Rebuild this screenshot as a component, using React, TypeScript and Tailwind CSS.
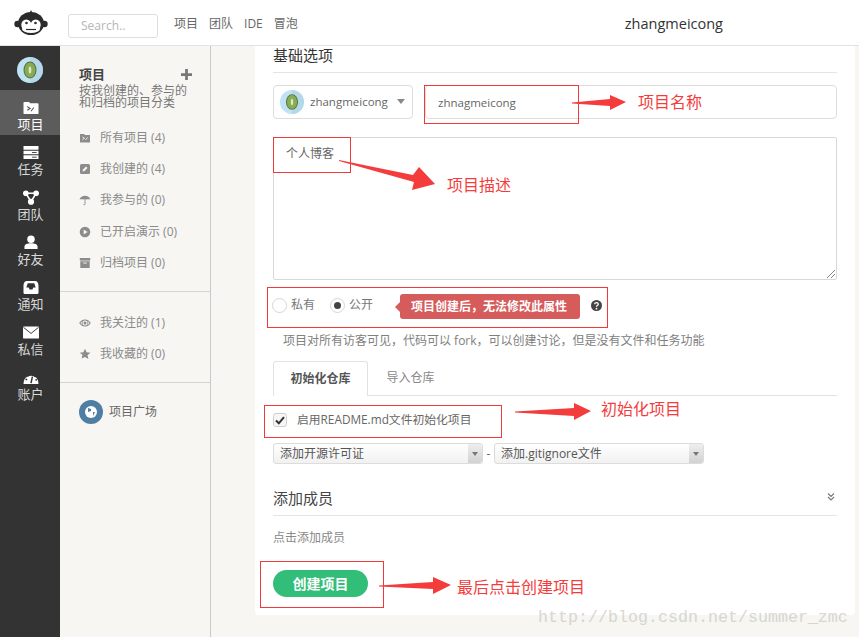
import React from "react";

const Kiwi = ({ size }: { size: number }) => (
  <svg width={size} height={size} viewBox="0 0 26 26" className="shrink-0">
    <circle cx="13" cy="13" r="13" fill="#bfe3f2" />
    <path d="M13 0a13 13 0 0 1 0 26z" fill="#acd3e6" opacity="0.7" />
    <ellipse cx="13" cy="13" rx="6.5" ry="8.5" fill="#5f6b3a" />
    <ellipse cx="13" cy="13" rx="5.5" ry="7.5" fill="#84ad55" />
    <ellipse cx="13" cy="13" rx="1.3" ry="3.5" fill="#e3e8b8" />
  </svg>
);

const NavIcon = ({ kind }: { kind: string }) => {
  const p = { width: 18, height: 15, viewBox: "0 0 18 16", fill: "#fff" };
  switch (kind) {
    case "项目":
      return (
        <svg {...p}>
          <path d="M1 3a1 1 0 0 1 1-1h5l1 1.500h8a1 1 0 0 1 1 1V14a1 1 0 0 1-1 1H2a1 1 0 0 1-1-1z" />
          <path d="M5 7l3 2-3 2M9 12l3-4" stroke="#5a5a5a" strokeWidth="1.200" fill="none" />
        </svg>
      );
    case "任务":
      return (
        <svg {...p}>
          <path d="M1 1h16v4H1zM1 6.200h16v3.600H1zM1 11h16v4H1z" />
          <path d="M10 8h5M10 13h5" stroke="#444" strokeWidth="1" />
        </svg>
      );
    case "团队":
      return (
        <svg {...p}>
          <circle cx="3.500" cy="3.500" r="3" />
          <circle cx="14.500" cy="3.500" r="3" />
          <circle cx="9" cy="12.500" r="3.300" />
          <path d="M3.500 3.500h11L9 12.500z" fill="none" stroke="#fff" strokeWidth="1.700" />
        </svg>
      );
    case "好友":
      return (
        <svg {...p}>
          <circle cx="9" cy="4.500" r="4" />
          <path d="M2 15v-2.500C2 10 5 8.800 9 8.800s7 1.200 7 3.700V15z" />
        </svg>
      );
    case "通知":
      return (
        <svg {...p}>
          <path d="M4.500 1h9c2 0 3.500 2 3.500 5v7.500a1.500 1.500 0 0 1-1.500 1.500h-13A1.500 1.500 0 0 1 1 13.500V6c0-3 1.500-5 3.500-5z" />
          <path d="M4 8l1.500-4.500h7L14 8h-2.500L10.500 10h-3L6.500 8z" fill="#333" />
        </svg>
      );
    case "私信":
      return (
        <svg {...p}>
          <rect x="0.500" y="1.500" width="17" height="13" rx="1" />
          <path d="M1 2.500l8 6.500 8-6.500" stroke="#333" strokeWidth="1" fill="none" />
        </svg>
      );
    default:
      return (
        <svg {...p}>
          <path d="M1 14a8 8 0 1 1 16 0c0 .5-.3 1-1 1H2c-.7 0-1-.5-1-1z" />
          <path d="M9 14l1.500-7" stroke="#333" strokeWidth="1.600" />
          <circle cx="4" cy="10" r="1" fill="#333" />
          <circle cx="6" cy="6" r="1" fill="#333" />
          <circle cx="13" cy="6.500" r="1" fill="#333" />
          <circle cx="14.500" cy="10.500" r="1" fill="#333" />
        </svg>
      );
  }
};

const PanelIcon = ({ kind }: { kind: string }) => {
  const p = { width: 12, height: 12, viewBox: "0 0 12 12", fill: "#8c8c8c" };
  switch (kind) {
    case "folder":
      return (
        <svg {...p}>
          <path d="M1 2h4l1 1h5v7.500H1z" />
          <path d="M3.500 5l2 1.300-2 1.300M6.500 8l2-2.500" stroke="#f7f6f3" strokeWidth=".9" fill="none" />
        </svg>
      );
    case "edit":
      return (
        <svg {...p}>
          <rect x="1" y="1" width="10" height="10" rx="1.500" />
          <path d="M3.500 8.500l.5-2 3-3 1.500 1.500-3 3z" fill="#f7f6f3" />
        </svg>
      );
    case "umbrella":
      return (
        <svg {...p}>
          <path d="M.5 5.500C1.500 3 3.500 1.800 6 1.800s4.500 1.200 5.500 3.700C10 5 9 5 8 5.500 7.200 5 6.800 5 6 5.500 5.200 5 4.800 5 4 5.500 3 5 2 5 .5 5.500z" />
          <path d="M6 5v5c0 1-1.500 1-1.500 0" stroke="#8c8c8c" fill="none" strokeWidth=".9" />
        </svg>
      );
    case "play":
      return (
        <svg {...p}>
          <path fillRule="evenodd" d="M6 .7a5.300 5.300 0 1 1 0 10.600A5.300 5.300 0 0 1 6 .7zM4.700 3.500v5L8.500 6z" />
        </svg>
      );
    case "archive":
      return (
        <svg {...p}>
          <path d="M.8 1h10.400v2.600H.8z" />
          <path fillRule="evenodd" d="M1.300 4.300h9.400V11H1.300zM4.300 5.500v1h3.400v-1z" />
        </svg>
      );
    case "eye":
      return (
        <svg {...p}>
          <path fillRule="evenodd" d="M6 2.500c2.700 0 4.800 1.700 5.800 3.500-1 1.800-3.100 3.500-5.800 3.500S1.200 7.800.2 6C1.200 4.200 3.300 2.500 6 2.500zm0 1a2.500 2.500 0 1 0 0 5 2.500 2.500 0 0 0 0-5zM1.400 6c.8 1 1.500 1.800 2.600 2.200C3.200 7.600 2.700 6.900 2.700 6s.5-1.600 1.300-2.200C2.900 4.200 2.200 5 1.400 6zm9.200 0c-.8-1-1.500-1.800-2.600-2.200.8.600 1.300 1.300 1.300 2.200s-.5 1.600-1.300 2.200c1.100-.4 1.800-1.200 2.600-2.200z" />
          <circle cx="6" cy="6" r="1.500" />
        </svg>
      );
    default:
      return (
        <svg {...p}>
          <path d="M6 .8l1.600 3.500 3.800.4-2.900 2.500.9 3.800L6 8.900l-3.400 1.700.9-3.800L.6 4.700l3.800-.4z" />
        </svg>
      );
  }
};

const nav = ["任务", "团队", "好友", "通知", "私信", "账户"];

const NavItem = ({ label, active }: { label: string; active?: boolean }) => (
  <div className={`h-[45px] pt-[10px] pl-[1px] flex flex-col items-center ${active ? "bg-[#5c5c5c] text-white" : "text-[#d8d8d8]"}`}>
    <NavIcon kind={label} />
    <span className="text-[13px] leading-[15px] mt-[2px]">{label}</span>
  </div>
);

const PanelItem = ({ icon, text }: { icon: string; text: string }) => (
  <div className="h-[31.300px] flex items-center gap-[9px] text-[12px] text-[#8a8a8a]">
    <span className="w-[12px] flex justify-center">
      <PanelIcon kind={icon} />
    </span>
    <span>{text}</span>
  </div>
);

const Select = ({ text, className }: { text: string; className: string }) => (
  <div className={`h-[21px] flex items-center rounded-[3px] border border-[#dcdcdc] bg-gradient-to-b from-white to-[#f1f1f1] ${className}`}>
    <span className="flex-1 pl-[6px] text-[12px] text-[#555]">{text}</span>
    <span className="w-[14px] h-full flex items-center justify-center bg-gradient-to-b from-[#eeeeee] to-[#d2d2d2] rounded-r-[3px]">
      <span className="border-x-[3px] border-x-transparent border-t-[4px] border-t-[#777]" />
    </span>
  </div>
);

const Red = ({ className }: { className: string }) => (
  <div className={`absolute border border-[#f03a3a] ${className}`} />
);

const Note = ({ text, className }: { text: string; className: string }) => (
  <div className={`absolute text-[16px] leading-[20px] text-[#f43c3c] ${className}`}>{text}</div>
);

const Arrow = ({ d, className, w, h }: { d: string; className: string; w: number; h: number }) => (
  <svg width={w} height={h} viewBox={`0 0 ${w} ${h}`} className={`absolute ${className}`}>
    <path d={d} fill="#f43c3c" />
  </svg>
);

export default function App() {
  return (
    <div
      className="relative w-[859px] h-[637px] overflow-hidden bg-[#f7f6f3] flex flex-col"
      style={{ fontFamily: '"Open Sans", "Noto Sans CJK SC", sans-serif' }}
    >
      <header className="h-[46px] shrink-0 bg-white border-b border-[#e2e2e2] flex items-center">
        <div className="w-[68px] pl-[14px]">
          <svg width="34" height="26" viewBox="0 0 34 26">
            <path d="M17 0l2 4 -4 0z" fill="#2b2b2b" />
            <circle cx="3.500" cy="14" r="3.200" fill="#2b2b2b" />
            <circle cx="30.500" cy="14" r="3.200" fill="#2b2b2b" />
            <ellipse cx="17" cy="13.500" rx="13" ry="11.500" fill="#2b2b2b" />
            <ellipse cx="12.300" cy="15" rx="5" ry="5.500" fill="#fff" />
            <ellipse cx="21.700" cy="15" rx="5" ry="5.500" fill="#fff" />
            <ellipse cx="17" cy="19" rx="9" ry="4" fill="#fff" />
            <circle cx="12.500" cy="13" r="1.300" fill="#2b2b2b" />
            <circle cx="21.500" cy="13" r="1.300" fill="#2b2b2b" />
            <path d="M12 19.500h10" stroke="#2b2b2b" strokeWidth="1.200" />
          </svg>
        </div>
        <div className="w-[90px] h-[24px] mt-[7px] rounded-[3px] border border-[#dedede] flex items-center pl-[12px] text-[12px] text-[#b5b5b5]">
          Search..
        </div>
        <nav className="ml-[16px] mt-[3px] flex items-center gap-[11px] text-[12px] text-[#666]">
          <span>项目</span>
          <span>团队</span>
          <span>IDE</span>
          <span>冒泡</span>
        </nav>
        <div className="ml-auto mr-[136px] mt-[2px] text-[14.500px] text-[#333]">zhangmeicong</div>
      </header>

      <div className="flex-1 flex min-h-0">
        <aside className="w-[60px] shrink-0 bg-[#333]">
          <div className="h-[44px] pb-[7px] flex items-end justify-center">
            <Kiwi size={26} />
          </div>
          <NavItem label="项目" active />
          {nav.map((n) => (
            <NavItem key={n} label={n} />
          ))}
        </aside>

        <section className="w-[151px] shrink-0 border-r border-[#c9c9c9] flex flex-col">
          <div className="pl-[19px] pr-[18px] pt-[21px]">
            <div className="flex items-center justify-between h-[15px]">
              <span className="text-[13px] font-semibold text-[#444]">项目</span>
              <svg width="11" height="11" viewBox="0 0 12 12">
                <path d="M4.500 0h3v4.500H12v3H7.500V12h-3V7.500H0v-3h4.500z" fill="#777" />
              </svg>
            </div>
            <p className="text-[12px] leading-[12px] text-[#777] mt-[3px]">按我创建的、参与的和归档的项目分类</p>
          </div>
          <div className="pl-[19px] mt-[13px] pb-[13px] border-b border-[#d4d4d4]">
            <PanelItem icon="folder" text="所有项目 (4)" />
            <PanelItem icon="edit" text="我创建的 (4)" />
            <PanelItem icon="umbrella" text="我参与的 (0)" />
            <PanelItem icon="play" text="已开启演示 (0)" />
            <PanelItem icon="archive" text="归档项目 (0)" />
          </div>
          <div className="pl-[19px] pt-[15px] pb-[12px] border-b border-[#d4d4d4]">
            <PanelItem icon="eye" text="我关注的 (1)" />
            <PanelItem icon="star" text="我收藏的 (0)" />
          </div>
          <div className="pl-[19px] pt-[17px] flex items-center gap-[6px] text-[12px] text-[#666]">
            <svg width="24" height="24" viewBox="0 0 24 24">
              <circle cx="12" cy="12" r="12" fill="#4e7ea3" />
              <path d="M12 6a6 6 0 1 1 0 12 6 6 0 0 1 0-12z" fill="#fff" />
              <path d="M9 8l3 1 0 2 -3 1zM14 12l2 0-2 4z" fill="#4e7ea3" />
            </svg>
            <span>项目广场</span>
          </div>
        </section>

        <main className="flex-1 min-w-0 pl-[44px] pr-[4px]">
          <div className="w-[600px] h-[569px] bg-white rounded-b-[4px] px-[18px] overflow-hidden">
            <div className="h-[27px] border-b border-[#e4e4e4] text-[15px] leading-[18px] text-[#333]">基础选项</div>

            <div className="mt-[12px] flex gap-[12px]">
              <div className="w-[140px] h-[34px] rounded-[4px] border border-[#dcdcdc] flex items-center pl-[6px] text-[11.500px] text-[#666]">
                <Kiwi size={24} />
                <span className="ml-[6px]">zhangmeicong</span>
                <span className="ml-[9px] -mt-[2px] border-x-[4.500px] border-x-transparent border-t-[5px] border-t-[#888]" />
              </div>
              <div className="flex-1 h-[34px] pt-[2px] rounded-[4px] border border-[#dcdcdc] flex items-center pl-[12px] text-[11.500px] text-[#666]">
                zhnagmeicong
              </div>
            </div>

            <div className="relative mt-[18px] h-[143px] rounded-[2px] border border-[#d8d8d8] pl-[12px] pt-[7px] text-[12px] text-[#666]">
              个人博客
              <svg width="8" height="8" viewBox="0 0 8 8" className="absolute right-[1px] bottom-[1px]">
                <path d="M8 0L0 8M8 4L4 8" stroke="#888" strokeWidth="1" />
              </svg>
            </div>

            <div className="mt-[15px] h-[20px] flex items-center text-[12px] text-[#777]">
              <span className="w-[15px] h-[15px] mt-[1px] rounded-full border border-[#d6d6d6] -ml-[1px]" />
              <span className="ml-[4px]">私有</span>
              <span className="ml-[15px] mt-[1px] w-[15px] h-[15px] rounded-full border border-[#d6d6d6] flex items-center justify-center">
                <span className="w-[7px] h-[7px] rounded-full bg-[#444]" />
              </span>
              <span className="ml-[4px]">公开</span>
              <span className="relative ml-[27px] w-[180px] h-[25px] mt-[3px] rounded-[3px] bg-[#d65c5c] text-white font-semibold flex items-center pl-[11px] text-[12px]">
                <span className="absolute -left-[5px] top-[8px] border-y-[5px] border-y-transparent border-r-[5px] border-r-[#d65c5c]" />
                项目创建后，无法修改此属性
              </span>
              <svg width="11" height="11" viewBox="0 0 11 11" className="ml-[11px]">
                <circle cx="5.500" cy="5.500" r="5.500" fill="#444" />
                <path d="M3.700 4.200c0-2.200 3.600-2.200 3.600 0 0 1.300-1.800 1.300-1.800 2.500" stroke="#fff" strokeWidth="1.300" fill="none" />
                <circle cx="5.500" cy="8.700" r=".9" fill="#fff" />
              </svg>
            </div>

            <p className="mt-[17px] pl-[10px] h-[18px] leading-[18px] text-[12px] text-[#808080]">
              项目对所有访客可见，代码可以 fork，可以创建讨论，但是没有文件和任务功能
            </p>

            <div className="mt-[11px] h-[35px] flex border-b border-[#e2e2e2]">
              <div className="w-[95px] h-[35px] rounded-t-[3px] border border-b-0 border-[#e2e2e2] bg-white flex items-center justify-center text-[12px] font-semibold text-[#555]">
                初始化仓库
              </div>
              <div className="w-[85px] flex items-center justify-center text-[12px] text-[#888]">导入仓库</div>
            </div>

            <div className="mt-[16px] h-[16px] flex items-center text-[11.800px] text-[#666]">
              <span className="w-[14px] h-[14px] rounded-[3px] border border-[#cfcfcf] bg-[#f6f6f6] flex items-center justify-center">
                <svg width="10" height="9" viewBox="0 0 10 9">
                  <path d="M1 4.500l2.800 2.800L9 1.200" stroke="#333" strokeWidth="2" fill="none" />
                </svg>
              </span>
              <span className="ml-[10px]">启用README.md文件初始化项目</span>
            </div>

            <div className="mt-[15px] flex items-center">
              <Select text="添加开源许可证" className="w-[210px]" />
              <span className="w-[11px] text-center text-[12px] text-[#666]">-</span>
              <Select text="添加.gitignore文件" className="w-[210px]" />
            </div>

            <div className="mt-[24px] h-[28px] border-b border-[#e4e4e4] flex justify-between text-[15px] leading-[20px] text-[#444]">
              <span>添加成员</span>
              <svg width="10" height="10" viewBox="0 0 10 10" className="mt-[4px] mr-[1px]">
                <path d="M2 1.500l3 3 3-3M2 5l3 3 3-3" stroke="#778" strokeWidth="1.100" fill="none" />
              </svg>
            </div>

            <p className="mt-[14px] text-[12px] leading-[16px] text-[#888]">点击添加成员</p>

            <button className="mt-[24px] w-[95px] h-[27px] rounded-full bg-[#32bd78] text-white text-[14px] font-bold">
              创建项目
            </button>
          </div>
        </main>
      </div>

      <Red className="left-[424px] top-[85px] w-[155px] h-[39px]" />
      <Red className="left-[273px] top-[137px] w-[78px] h-[36px]" />
      <Red className="left-[267px] top-[287px] w-[341px] h-[41px]" />
      <Red className="left-[264px] top-[405px] w-[238px] h-[33px]" />
      <Red className="left-[260px] top-[561px] w-[124px] h-[47px]" />

      <Arrow className="left-[572px] top-[95px]" w={54} h={16} d="M0 7.500L38 4V0L54 7L38 15V11L0 8.500Z" />
      <Arrow className="left-[339px] top-[160px]" w={96} h={30} d="M0 0L74 15L80 7L96 24L73 30L75 22L0 1Z" />
      <Arrow className="left-[515px] top-[403px]" w={76} h={17} d="M0 8.500L59 5V0L76 8L59 17V13L0 9.500Z" />
      <Arrow className="left-[379px] top-[577px]" w={72} h={17} d="M0 8.500L54 5V0L72 8L54 17V12L0 9.500Z" />

      <Note text="项目名称" className="left-[638px] top-[92px]" />
      <Note text="项目描述" className="left-[447px] top-[175px]" />
      <Note text="初始化项目" className="left-[601px] top-[399px]" />
      <Note text="最后点击创建项目" className="left-[457px] top-[577px]" />

      <div
        className="absolute left-[538px] top-[608px] text-[16.670px] leading-[20px] text-[#c9c9c0] opacity-70"
        style={{ fontFamily: '"Liberation Mono", monospace' }}
      >
        http://blog.csdn.net/summer_zmc
      </div>
    </div>
  );
}
